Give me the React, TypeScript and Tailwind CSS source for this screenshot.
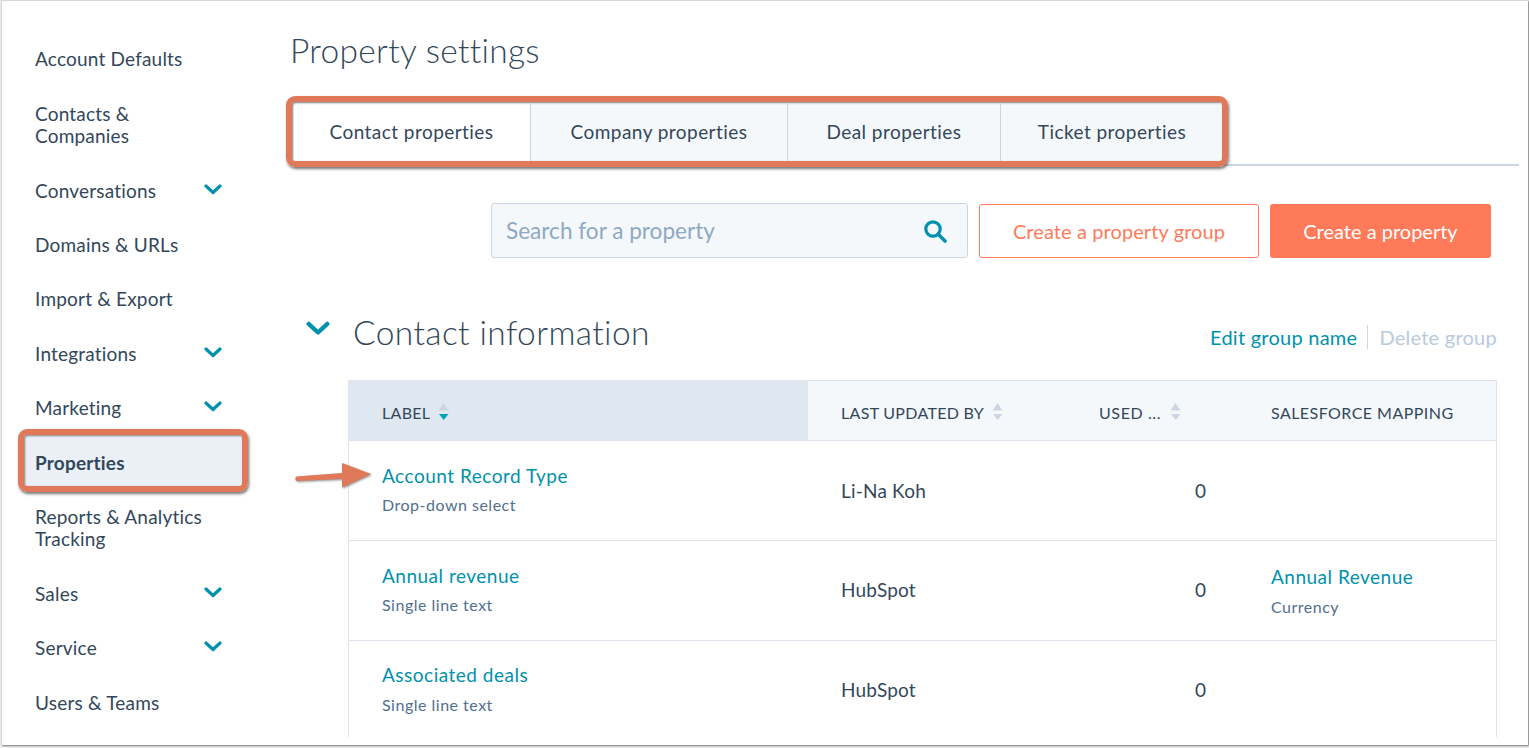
import React from "react";

function Chevron({ className }: { className?: string }) {
  return (
    <svg viewBox="0 0 18 11" className={className} fill="none">
      <path d="M2 2l7 6.5L16 2" stroke="#0091ae" strokeWidth="3.2" strokeLinecap="round" strokeLinejoin="round" />
    </svg>
  );
}

function Sort({ active, className }: { active?: boolean; className: string }) {
  return (
    <svg viewBox="0 0 11 20" className={`w-[11px] h-[20px] shrink-0 -mt-[2px] ${className}`}>
      <path d="M5.5 1L10.5 8.5H0.5Z" fill="#cbd6e2" />
      <path d="M1 12H10.5L5.7 18Z" fill={active ? "#00a4bd" : "#cbd6e2"} />
    </svg>
  );
}

const navItems: { label: React.ReactNode; chev?: boolean; active?: boolean }[] = [
  { label: "Account Defaults" },
  { label: <>Contacts &amp;<br />Companies</> },
  { label: "Conversations", chev: true },
  { label: "Domains & URLs" },
  { label: "Import & Export" },
  { label: "Integrations", chev: true },
  { label: "Marketing", chev: true },
  { label: "Properties", active: true },
  { label: <>Reports &amp; Analytics<br />Tracking</> },
  { label: "Sales", chev: true },
  { label: "Service", chev: true },
  { label: "Users & Teams" },
];

const rows = [
  { name: "Account Record Type", type: "Drop-down select", by: "Li-Na Koh", n: "0" },
  { name: "Annual revenue", type: "Single line text", by: "HubSpot", n: "0", sf: "Annual Revenue", sfType: "Currency" },
  { name: "Associated deals", type: "Single line text", by: "HubSpot", n: "0" },
];

const tabs = ["Contact properties", "Company properties", "Deal properties", "Ticket properties"];
const tabWidths = ["w-[238px]", "w-[257px]", "w-[213px]", "w-[222px]"];

export default function App() {
  return (
    <div className="relative w-[1529px] h-[748px] overflow-hidden bg-[#f4f4f4] font-['Lato','Noto_Sans',sans-serif] text-[#33475b]">
      <div className="flex h-[745px] w-[1527px] ml-[1px] bg-white border-l border-t border-[#d5d5d5] shadow-[1px_1px_2px_rgba(0,0,0,0.55)] overflow-hidden">
        <nav className="w-[248px] shrink-0 pt-[31.4px] pl-[23px] pr-[6px]">
          {navItems.map((it, i) => (
            <div
              key={i}
              className={`flex items-center justify-between pl-[10px] pr-[22px] pt-[16px] pb-[16px] text-[19px] tracking-[0.2px] leading-[22.4px] ${it.active ? "bg-[#eaf0f6] font-bold" : ""}`}
            >
              <span>{it.label}</span>
              {it.chev && <Chevron className="w-[18px] h-[11px] mt-[-3px]" />}
            </div>
          ))}
        </nav>
        <main className="flex-1 min-w-0 pl-[40px] pr-[9px]">
          <h1 className="mt-[28px] text-[33.5px] leading-[42px] font-light tracking-[0.3px]">Property settings</h1>
          <div className="mt-[33px] flex h-[60px] border-b-2 border-[#cbd6e2] box-content">
            <div className="flex ml-[3px]">
              {tabs.map((t, i) => (
                <div
                  key={t}
                  className={`${tabWidths[i]} flex items-center justify-center pb-[3px] text-[19px] tracking-[0.45px] ${i ? "bg-[#f5f8fa]" : "bg-white"} ${i < 3 ? "border-r border-[#cbd6e2]" : ""}`}
                >
                  {t}
                </div>
              ))}
            </div>
          </div>
          <div className="mt-[37px] flex items-center pl-[201px] pr-[28px] gap-[11px]">
            <div className="w-[477px] h-[55px] flex items-center justify-between pl-[14px] pr-[20px] bg-[#f5f8fa] border border-[#cbd6e2] rounded-[3px] text-[22.6px] text-[#8ea9c4]">
              <span>Search for a property</span>
              <svg viewBox="0 0 24 24" className="w-[24px] h-[24px]" fill="none" stroke="#0091ae">
                <circle cx="10" cy="10" r="7.2" strokeWidth="3.2" />
                <path d="M15.5 15.5L22 22" strokeWidth="3.6" strokeLinecap="round" />
              </svg>
            </div>
            <div className="w-[280px] h-[54px] flex items-center justify-center rounded-[3px] border border-[#ff7a59] text-[#ff7a59] text-[20px] tracking-[0.1px]">
              Create a property group
            </div>
            <div className="w-[221px] h-[54px] flex items-center justify-center rounded-[3px] bg-[#ff7a59] text-white text-[20px]">
              Create a property
            </div>
          </div>
          <div className="mt-[50px] flex items-center h-[50px] pr-[22px]">
            <Chevron className="w-[24px] h-[15px] ml-[16px] -mt-[10px]" />
            <h2 className="ml-[23px] text-[33.5px] leading-[50px] font-light tracking-[0.4px] -mt-[2px]">Contact information</h2>
            <div className="ml-auto flex items-center text-[20px] tracking-[0.25px] mt-[7px]">
              <span className="text-[#0091ae]">Edit group name</span>
              <span className="ml-[10px] mr-[11px] w-px h-[24px] bg-[#cbd6e2]" />
              <span className="text-[#b9cadb]">Delete group</span>
            </div>
          </div>
          <div className="mt-[22px] ml-[58px] mr-[22px] h-[357px] border-l border-r border-[#dfe3eb] overflow-hidden">
            <div className="grid grid-cols-[459px_258px_172px_1fr] h-[61px] border-y border-[#dfe3eb] bg-[#f5f8fa] text-[16px] tracking-[0.3px] uppercase">
              <div className="flex items-center pl-[33px] pt-[4px] bg-[#dfe7f0]">Label<Sort active className="ml-[8px]" /></div>
              <div className="flex items-center pl-[33px] pt-[4px]">Last updated by<Sort className="ml-[8px]" /></div>
              <div className="flex items-center pl-[33px] pt-[4px] tracking-[0.6px]">Used ...<Sort className="ml-[9px]" /></div>
              <div className="flex items-center pl-[33px] pt-[4px] tracking-[0.45px]">Salesforce mapping</div>
            </div>
            {rows.map((r, idx) => (
              <div key={r.name} className="grid grid-cols-[459px_258px_172px_1fr] h-[100px] border-b border-[#dfe3eb]">
                <div className={`pl-[33px] ${idx === 2 ? "pt-[20px]" : "pt-[21px]"}`}>
                  <div className="text-[19px] tracking-[0.5px] leading-[28px] text-[#0091ae]">{r.name}</div>
                  <div className={`text-[16px] tracking-[0.5px] leading-[20px] text-[#516f90] ${idx === 2 ? "mt-[6px]" : "mt-[5px]"}`}>{r.type}</div>
                </div>
                <div className="pl-[33px] flex items-center text-[19px] tracking-[0.2px]">{r.by}</div>
                <div className="pr-[32px] flex items-center justify-end text-[19px]">{r.n}</div>
                <div className={`pl-[33px] pt-[22px] bg-white ${idx === 0 ? "relative h-[100px] border-b border-[#dfe3eb]" : ""}`}>
                  {r.sf && (
                    <>
                      <div className="text-[19px] tracking-[0.5px] leading-[28px] text-[#0091ae]">{r.sf}</div>
                      <div className="mt-[6px] text-[16px] tracking-[0.5px] leading-[20px] text-[#516f90]">{r.sfType}</div>
                    </>
                  )}
                </div>
              </div>
            ))}
          </div>
        </main>
      </div>

      {/* Annotations */}
      <div className="absolute left-[18px] top-[429px] w-[230px] h-[63px] rounded-[9px] border-[6px] border-[#e0795a] shadow-[1px_2px_3px_rgba(0,0,0,0.55),inset_1px_1px_2px_rgba(0,0,0,0.5)]" />
      <div className="absolute left-[286px] top-[96px] w-[942px] h-[71px] rounded-[9px] border-[6px] border-[#e0795a] shadow-[1px_2px_3px_rgba(0,0,0,0.55),inset_1px_1px_2px_rgba(0,0,0,0.5)]" />
      <svg className="absolute left-[290px] top-[458px] drop-shadow-[1px_1px_1px_rgba(0,0,0,0.45)]" width="86" height="36" viewBox="0 0 86 36">
        <path d="M6.5 18.5L52 15V5L81 16L52 29.5V21L6.5 23Q4 20.5 6.5 18.5Z" fill="#e0795a" />
      </svg>
    </div>
  );
}
